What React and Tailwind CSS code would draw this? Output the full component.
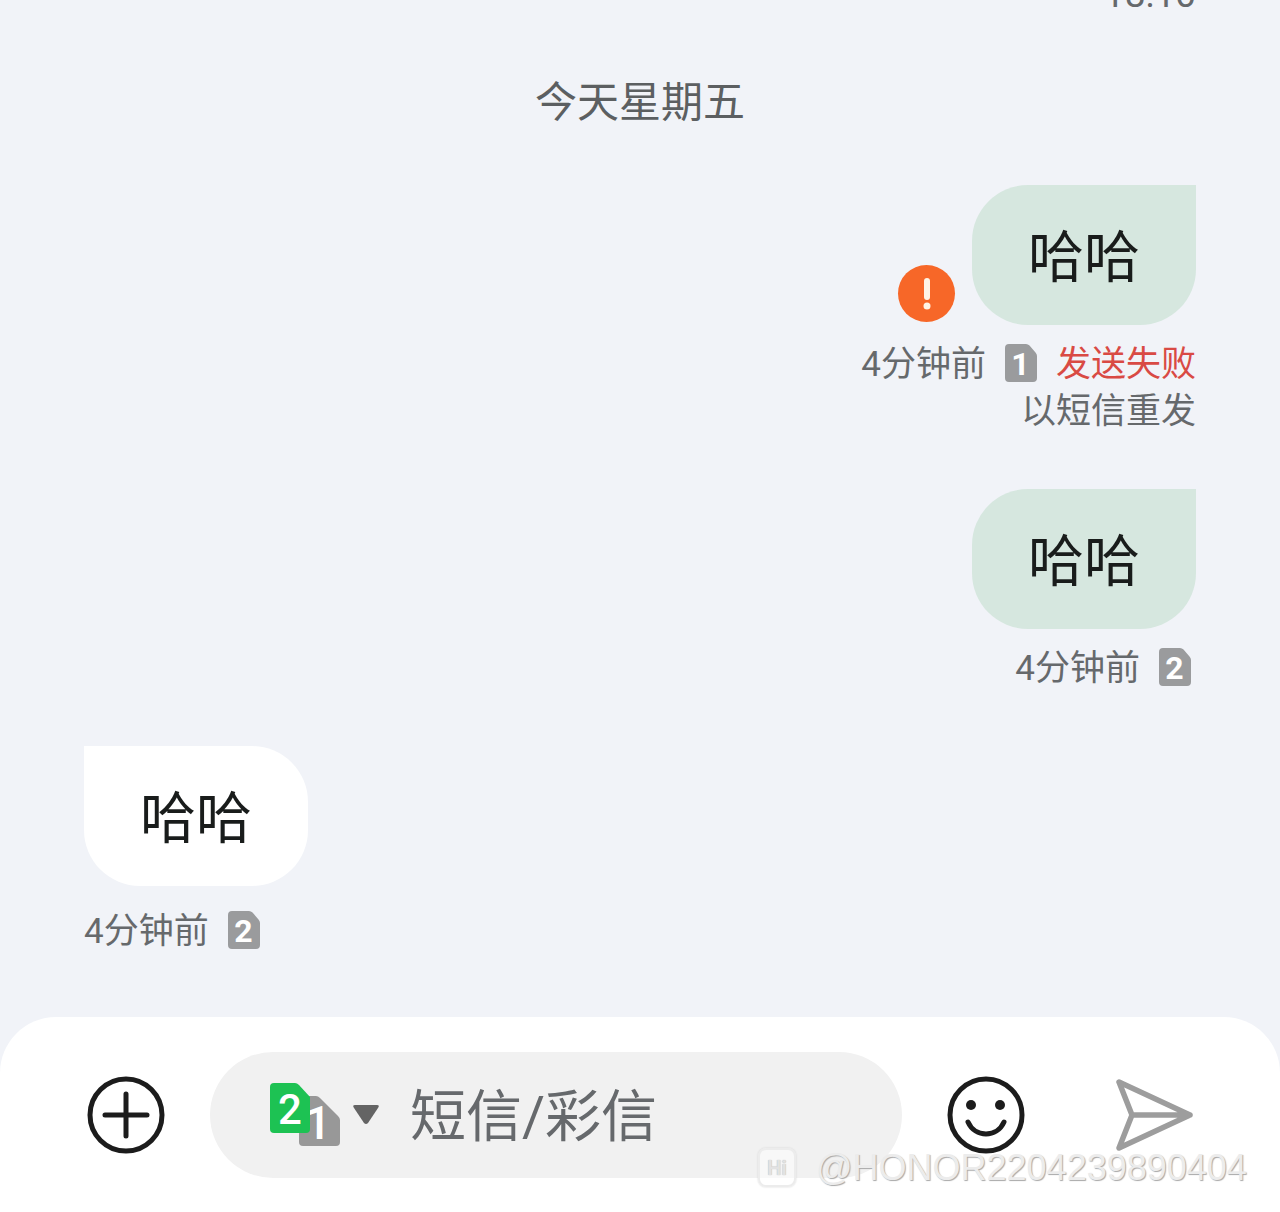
import React from 'react';

const cjk = 'font-["Roboto","Noto_Sans_CJK_SC",sans-serif]';

function SimBadge({ n }) {
  return (
    <svg width="32" height="38" viewBox="0 0 32 38" className="shrink-0 -mt-[4px]">
      <path d="M4 0H21Q23 0 24.500 1.500L30.500 8.500Q32 10 32 12V34Q32 38 28 38H4Q0 38 0 34V4Q0 0 4 0Z" fill="#9a9b9d" />
      <text x="15.500" y="31" textAnchor="middle" fontSize="32" fontWeight="700" fill="#fff" fontFamily="Roboto">{n}</text>
    </svg>
  );
}

function Bubble({ white }) {
  return (
    <div className={`w-[224px] h-[140px] pt-[5px] flex items-center justify-center text-[56px] leading-none text-[#191c1b] rounded-[56px] ${white ? 'bg-white rounded-tl-none' : 'bg-[#d6e7df] rounded-tr-none'}`}>
      哈哈
    </div>
  );
}

function Meta({ children }) {
  return <div className="flex items-center text-[35px] leading-[47px] text-[#66696c]">{children}</div>;
}

export default function App() {
  return (
    <div className={`relative w-[1280px] h-[1212px] overflow-hidden bg-[#f1f3f8] flex flex-col ${cjk}`}>
      <div className="h-[15px] flex justify-end items-end pr-[84px] text-[37px] leading-[40px] text-[#66696c]">18:10</div>
      <div className="mt-[61px] text-center text-[42px] leading-[54px] text-[#5c5f61]">今天星期五</div>

      <div className="flex-1 flex flex-col px-[84px] pt-[55px]">
        <div className="flex flex-col items-end">
          <div className="flex items-end">
            <div className="w-[57px] h-[57px] mr-[17px] mb-[3px] rounded-full bg-[#f76728] flex items-center justify-center">
              <svg width="10" height="32" viewBox="0 0 10 32">
                <path d="M5 3V19" stroke="#fff4e6" strokeWidth="6" strokeLinecap="round" />
                <circle cx="5" cy="28" r="3.500" fill="#fff4e6" />
              </svg>
            </div>
            <Bubble />
          </div>
          <div className="mt-[16px]">
            <Meta>
              4分钟前
              <span className="ml-[19px] mr-[19px] flex"><SimBadge n="1" /></span>
              <span className="text-[#d94a44]">发送失败</span>
            </Meta>
          </div>
          <div className="text-[35px] leading-[47px] text-[#66696c]">以短信重发</div>
        </div>

        <div className="flex flex-col items-end mt-[54px]">
          <Bubble />
          <div className="mt-[16px] pr-[5px]">
            <Meta>
              4分钟前
              <span className="ml-[19px] flex"><SimBadge n="2" /></span>
            </Meta>
          </div>
        </div>

        <div className="flex flex-col items-start mt-[54px]">
          <Bubble white />
          <div className="mt-[22px]">
            <Meta>
              4分钟前
              <span className="ml-[19px] flex"><SimBadge n="2" /></span>
            </Meta>
          </div>
        </div>
      </div>

      <div className="h-[195px] bg-white rounded-t-[56px] flex items-start pt-[35px]">
        <div className="w-[210px] h-[126px] flex items-center pl-[87px]">
          <svg width="78" height="78" viewBox="0 0 78 78">
            <circle cx="39" cy="39" r="36" fill="none" stroke="#1c1c1c" strokeWidth="5" />
            <path d="M39 18V60M18 39H60" stroke="#1c1c1c" strokeWidth="5" strokeLinecap="round" />
          </svg>
        </div>
        <div className="w-[692px] h-[126px] rounded-[63px] bg-[#f1f1f1] flex items-center pl-[60px]">
          <svg width="72" height="66" viewBox="0 0 72 66" className="shrink-0 mt-[2px]">
            <path d="M33 13H46Q48 13 50 15L68 33Q70 35 70 37V59Q70 63 66 63H33Q29 63 29 59V17Q29 13 33 13Z" fill="#989898" />
            <text x="48" y="56" textAnchor="middle" fontSize="46" fontWeight="500" fill="#fff" fontFamily="Roboto">1</text>
            <path d="M4 0H25Q27 0 29 2L40 14V46Q40 50 36 50H4Q0 50 0 46V4Q0 0 4 0Z" fill="#1dc253" />
            <text x="20" y="41" textAnchor="middle" fontSize="42" fontWeight="500" fill="#fff" fontFamily="Roboto">2</text>
          </svg>
          <svg width="28" height="20" viewBox="0 0 28 20" className="shrink-0 ml-[10px] mt-[-1px]">
            <path d="M3 0H25Q28 0 26 3L16 18Q14 20 12 18L2 3Q0 0 3 0Z" fill="#646464" />
          </svg>
          <span className="ml-[30px] mt-[4px] text-[56px] leading-none text-[#66696c]">短信/彩信</span>
        </div>
        <div className="w-[168px] h-[126px] flex items-center justify-center">
          <svg width="78" height="78" viewBox="0 0 78 78">
            <circle cx="39" cy="39" r="36" fill="none" stroke="#1c1c1c" strokeWidth="5" />
            <circle cx="24" cy="29" r="5" fill="#1c1c1c" />
            <circle cx="53" cy="29" r="5" fill="#1c1c1c" />
            <path d="M21 46C28 62 50 62 57 46" fill="none" stroke="#1c1c1c" strokeWidth="5" strokeLinecap="round" />
          </svg>
        </div>
        <div className="w-[76px] h-[126px] ml-[46px] flex items-center justify-center">
          <svg width="78" height="72" viewBox="0 0 78 72" className="shrink-0">
            <path d="M4 3L75 36L4 69L17 36ZM17 36H75" fill="none" stroke="#9d9d9d" strokeWidth="5.500" strokeLinejoin="round" strokeLinecap="round" />
          </svg>
        </div>
      </div>

      {/* watermark */}
      <div className="absolute left-[758px] top-[1148px] flex items-center">
        <div className="w-[38px] h-[39px] rounded-[8px] border-2 border-[#ececec] bg-white/50 shadow-[0_0_2px_#d0d0d0] flex items-center justify-center text-[20px] font-bold leading-none text-[#e2e2e2] [text-shadow:0_0_1px_#a8a8a8]">
          Hi
        </div>
        <span className="ml-[20px] font-['Liberation_Sans',sans-serif] text-[36px] leading-none text-[#ececec] [text-shadow:1px_1px_1px_#a8a8a8]">
          @HONOR2204239890404
        </span>
      </div>
    </div>
  );
}
